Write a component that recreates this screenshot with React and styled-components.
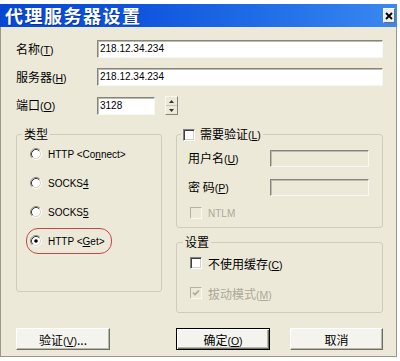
import React from 'react';
import styled, { createGlobalStyle } from 'styled-components';

const Global = createGlobalStyle`
  html, body { margin: 0; padding: 0; background: #fff; }
  body { font-family: "Liberation Sans", "Noto Sans CJK SC", sans-serif; }
  * { box-sizing: border-box; }
`;

const Frame = styled.div`
  width: 400px;
  height: 361px;
  padding: 4px 3px 4px 0;
  background: #fff;
  display: flex;
`;

const Window = styled.div`
  flex: 1;
  display: flex;
  flex-direction: column;
`;

const TitleBar = styled.div`
  height: 23px;
  flex: none;
  display: flex;
  align-items: center;
  justify-content: space-between;
  padding: 0 2px 0 5px;
  background: linear-gradient(to right, #0847d2 0%, #0f55de 35%, #2370e8 70%, #3a88f0 100%);
`;

const Title = styled.h1`
  margin: 0;
  font: bold 18px/23px "Noto Sans CJK SC", sans-serif;
  color: #fff;
  letter-spacing: 1.5px;
  text-shadow: 1px 1px 0 rgba(0, 0, 40, 0.35);
`;

const CloseButton = styled.button`
  width: 12px;
  height: 15px;
  padding: 0;
  border: 1px solid;
  border-color: #fff #707070 #707070 #fff;
  background: #eeeeea;
  display: flex;
  align-items: center;
  justify-content: center;
`;

const Body = styled.div`
  flex: 1;
  background: #ece9d8;
  border: solid #9a978a;
  border-width: 0 1px 1px 1px;
  padding: 13px 13px 6px 15px;
  display: flex;
  flex-direction: column;
  font-size: 12px;
  color: #000;
`;

const Fields = styled.div`
  display: grid;
  grid-template-columns: 81px 1fr;
  row-gap: 10px;
  align-items: center;
`;

const Label = styled.label`
  font-family: "Noto Sans CJK SC", sans-serif;
  font-size: 12px;
  line-height: 16px;
  white-space: nowrap;
  color: ${p => (p.$disabled ? '#aca899' : '#000')};
`;

const Key = styled.span`
  font-family: "Liberation Sans", sans-serif;
  font-size: 10.5px;
  & u { text-decoration: underline; text-underline-offset: 1px; }
`;

const TextBox = styled.div`
  height: ${p => p.$h || 18}px;
  width: ${p => (p.$w ? `${p.$w}px` : 'auto')};
  border: 1px solid;
  border-color: #86857c #f7f7f3 #f7f7f3 #86857c;
  box-shadow: inset 1px 1px 0 #bdbbb0;
  background: ${p => (p.$disabled ? '#ece9d8' : '#fff')};
  font: 10px/16px "Liberation Sans", sans-serif;
  padding: 0 2px;
  color: #000;
  display: flex;
  align-items: center;
`;

const PortRow = styled.div`
  display: flex;
  align-items: center;
  gap: 10px;
`;

const Spinner = styled.div`
  width: 13px;
  height: 19px;
  display: flex;
  flex-direction: column;
  border: 1px solid;
  border-color: #f7f7f3 #86857c #86857c #f7f7f3;
`;

const SpinBtn = styled.div`
  flex: 1;
  display: flex;
  align-items: center;
  justify-content: center;
  background: #ece9d8;
  border-bottom: ${p => (p.$top ? '1px solid #c8c5b6' : 'none')};
`;

const Groups = styled.div`
  margin-top: 12px;
  display: grid;
  grid-template-columns: 146px 207px;
  column-gap: 14px;
  align-items: start;
`;

const Column = styled.div`
  display: flex;
  flex-direction: column;
  gap: 7px;
`;

const Group = styled.fieldset`
  margin: 0;
  padding: 0;
  min-width: 0;
  border: 1px solid #cfccbc;
  border-radius: 3px;
`;

const Legend = styled.legend`
  margin-left: ${p => p.$offset}px;
  padding: 0 2px;
  font-family: "Noto Sans CJK SC", sans-serif;
  font-size: 12px;
  line-height: 14px;
  display: flex;
  align-items: center;
  gap: 5px;
`;

const TypeList = styled.div`
  display: flex;
  flex-direction: column;
  gap: 3px;
  padding: 0 0 37px 9px;
`;

const RadioRow = styled.label`
  align-self: flex-start;
  height: 26px;
  display: inline-flex;
  align-items: center;
  gap: 6px;
  padding: 0 6px 0 3px;
  border: 1.5px solid ${p => (p.$highlight ? '#c4474a' : 'transparent')};
  border-radius: 12px;
  font: 10px "Liberation Sans", sans-serif;
  white-space: nowrap;
  & u { text-underline-offset: 1px; }
`;

const AuthBody = styled.div`
  display: grid;
  grid-template-columns: 82px 99px;
  row-gap: 12px;
  align-items: center;
  padding: 8px 13px 7px 11px;
`;

const CheckRow = styled.label`
  grid-column: ${p => (p.$span ? '1 / -1' : 'auto')};
  margin-left: ${p => p.$indent || 0}px;
  margin-top: ${p => p.$mt || 0}px;
  height: 14px;
  display: flex;
  align-items: center;
  gap: 6px;
  font-family: ${p => (p.$latin ? '"Liberation Sans", sans-serif' : '"Noto Sans CJK SC", sans-serif')};
  font-size: ${p => (p.$latin ? '10px' : '12px')};
  color: ${p => (p.$disabled ? '#aca899' : '#000')};
`;

const SettingsBody = styled.div`
  display: flex;
  flex-direction: column;
  gap: 16px;
  padding: 7px 10px 12px 13px;
`;

const Box = styled.span`
  width: 12px;
  height: 12px;
  flex: none;
  border: 1px solid;
  border-color: ${p => (p.$disabled ? '#b5b2a5 #fafaf7 #fafaf7 #b5b2a5' : '#808080 #ffffff #ffffff #808080')};
  box-shadow: ${p => (p.$disabled ? 'none' : 'inset 1px 1px 0 #404040, inset -1px -1px 0 #d4d0c8')};
  background: ${p => (p.$disabled ? '#ece9d8' : '#fff')};
  display: flex;
  align-items: center;
  justify-content: center;
`;

const Buttons = styled.div`
  margin-top: auto;
  display: grid;
  grid-template-columns: 146px 207px;
  column-gap: 14px;
`;

const RightButtons = styled.div`
  display: flex;
  justify-content: space-between;
`;

const Button = styled.button`
  width: ${p => p.$w || 94}px;
  height: 22px;
  padding: 0;
  background: #f4f3ee;
  border: 1px solid;
  border-color: ${p => (p.$default ? '#000' : '#ffffff #6f6e66 #6f6e66 #ffffff')};
  box-shadow: ${p =>
    p.$default
      ? 'inset 1px 1px 0 #fff, inset -1px -1px 0 #6f6e66, inset -2px -2px 0 #b9b7aa'
      : 'inset -1px -1px 0 #b9b7aa'};
  font-family: "Noto Sans CJK SC", sans-serif;
  font-size: 12px;
  color: #000;
  display: flex;
  align-items: center;
  justify-content: center;
`;

function Radio({ checked }) {
  return (
    <svg width="12" height="12" viewBox="0 0 12 12">
      <circle cx="6" cy="6" r="4.2" fill="#fff" />
      <path d="M2.11 9.89 A5.5 5.5 0 0 1 9.89 2.11" fill="none" stroke="#8a8a84" strokeWidth="1" />
      <path d="M9.89 2.11 A5.5 5.5 0 0 1 2.11 9.89" fill="none" stroke="#ffffff" strokeWidth="1" />
      <path d="M2.82 9.18 A4.5 4.5 0 0 1 9.18 2.82" fill="none" stroke="#3c3c3c" strokeWidth="1" />
      <path d="M9.18 2.82 A4.5 4.5 0 0 1 2.82 9.18" fill="none" stroke="#d8d5c8" strokeWidth="1" />
      {checked && <circle cx="6" cy="6" r="1.8" fill="#000" />}
    </svg>
  );
}

function Check({ checked, disabled }) {
  return (
    <Box $disabled={disabled}>
      {checked && (
        <svg width="8" height="8" viewBox="0 0 8 8">
          <path d="M1 3.5 L3 5.5 L7 1.5" fill="none" stroke={disabled ? '#aca899' : '#000'} strokeWidth="1.6" />
        </svg>
      )}
    </Box>
  );
}

const Mn = ({ k }) => (
  <Key>
    (<u>{k}</u>)
  </Key>
);

export default function App() {
  return (
    <>
      <Global />
      <Frame>
        <Window>
          <TitleBar>
            <Title>代理服务器设置</Title>
            <CloseButton aria-label="关闭">
              <svg width="8" height="8" viewBox="0 0 8 8">
                <path d="M1 1 L7 7 M7 1 L1 7" stroke="#000" strokeWidth="1.8" />
              </svg>
            </CloseButton>
          </TitleBar>
          <Body>
            <Fields>
              <Label>名称<Mn k="T" /></Label>
              <TextBox>218.12.34.234</TextBox>
              <Label>服务器<Mn k="H" /></Label>
              <TextBox>218.12.34.234</TextBox>
              <Label>端口<Mn k="O" /></Label>
              <PortRow>
                <TextBox $w={58}>3128</TextBox>
                <Spinner>
                  <SpinBtn $top>
                    <svg width="5" height="3" viewBox="0 0 5 3"><path d="M0 3 L2.5 0 L5 3 Z" fill="#333" /></svg>
                  </SpinBtn>
                  <SpinBtn>
                    <svg width="5" height="3" viewBox="0 0 5 3"><path d="M0 0 L2.5 3 L5 0 Z" fill="#333" /></svg>
                  </SpinBtn>
                </Spinner>
              </PortRow>
            </Fields>

            <Groups>
              <Group>
                <Legend $offset={5}>类型</Legend>
                <TypeList>
                  <RadioRow><Radio /><span>HTTP &lt;Co<u>n</u>nect&gt;</span></RadioRow>
                  <RadioRow><Radio /><span>SOCKS<u>4</u></span></RadioRow>
                  <RadioRow><Radio /><span>SOCKS<u>5</u></span></RadioRow>
                  <RadioRow $highlight><Radio checked /><span>HTTP &lt;<u>G</u>et&gt;</span></RadioRow>
                </TypeList>
              </Group>

              <Column>
                <Group>
                  <Legend $offset={4}>
                    <Check />
                    <span>需要验证<Mn k="L" /></span>
                  </Legend>
                  <AuthBody>
                    <Label>用户名<Mn k="U" /></Label>
                    <TextBox $h={17} $disabled />
                    <Label>密&nbsp;码<Mn k="P" /></Label>
                    <TextBox $h={17} $disabled />
                    <CheckRow $span $indent={2} $mt={-2} $latin $disabled>
                      <Check disabled />
                      <span>NTLM</span>
                    </CheckRow>
                  </AuthBody>
                </Group>
                <Group>
                  <Legend $offset={6}>设置</Legend>
                  <SettingsBody>
                    <CheckRow>
                      <Check />
                      <span>不使用缓存<Mn k="C" /></span>
                    </CheckRow>
                    <CheckRow $disabled>
                      <Check checked disabled />
                      <span>拔动模式<Mn k="M" /></span>
                    </CheckRow>
                  </SettingsBody>
                </Group>
              </Column>
            </Groups>

            <Buttons>
              <div>
                <Button><span>验证<Mn k="V" />...</span></Button>
              </div>
              <RightButtons>
                <Button $default><span>确定<Mn k="O" /></span></Button>
                <Button $w={93}>取消</Button>
              </RightButtons>
            </Buttons>
          </Body>
        </Window>
      </Frame>
    </>
  );
}
